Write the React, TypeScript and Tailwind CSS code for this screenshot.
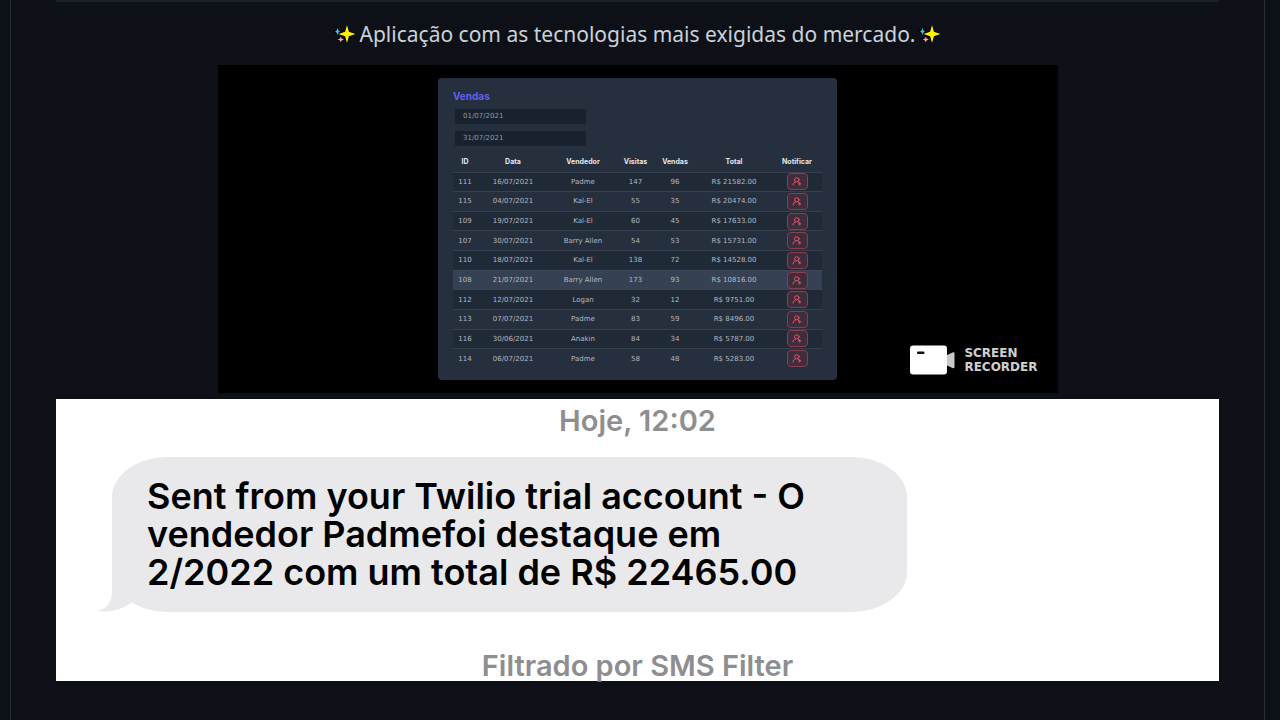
import React from "react";

type Sale = {
  id: number;
  date: string;
  seller: string;
  visits: number;
  deals: number;
  total: string;
};

const sales: Sale[] = [
  { id: 111, date: "16/07/2021", seller: "Padme", visits: 147, deals: 96, total: "21582.00" },
  { id: 115, date: "04/07/2021", seller: "Kal-El", visits: 55, deals: 35, total: "20474.00" },
  { id: 109, date: "19/07/2021", seller: "Kal-El", visits: 60, deals: 45, total: "17633.00" },
  { id: 107, date: "30/07/2021", seller: "Barry Allen", visits: 54, deals: 53, total: "15731.00" },
  { id: 110, date: "18/07/2021", seller: "Kal-El", visits: 138, deals: 72, total: "14528.00" },
  { id: 108, date: "21/07/2021", seller: "Barry Allen", visits: 173, deals: 93, total: "10816.00" },
  { id: 112, date: "12/07/2021", seller: "Logan", visits: 32, deals: 12, total: "9751.00" },
  { id: 113, date: "07/07/2021", seller: "Padme", visits: 83, deals: 59, total: "8496.00" },
  { id: 116, date: "30/06/2021", seller: "Anakin", visits: 84, deals: 34, total: "5787.00" },
  { id: 114, date: "06/07/2021", seller: "Padme", visits: 58, deals: 48, total: "5283.00" },
];

const highlightedId = 108;

function Sparkles() {
  return (
    <svg viewBox="0 0 22 20" className="h-5 w-[22px] shrink-0" aria-hidden="true">
      <g stroke="#000" strokeWidth="1.6" strokeLinejoin="round">
        <path d="M13 1.500 14.600 8 21 10l-6.400 2-1.600 6.500-1.600-6.500L5 10l6.400-2z" />
        <path d="M3.500 4l1 2.500L7 7.500l-2.500 1-1 2.500-1-2.500L0 7.500l2.500-1z" />
        <path d="M6.800 12.500l.9 2.100 2.300.9-2.300.9-.9 2.100-.9-2.100-2.300-.9 2.300-.9z" />
      </g>
      <path fill="#fff100" d="M13 1 14.900 7.800 21.500 10l-6.600 2.200-1.900 6.800-1.900-6.800L4.500 10l6.600-2.200z" />
      <path fill="#29c5f6" d="M3.500 4l1 2.500L6 7.500l-1.500 1-1 2.500-1-2.500L1 7.500l1.500-1z" />
      <path fill="#f59ac0" d="M6.800 12.500l.9 2.100 2.300.9-2.300.9-.9 2.100-.9-2.100-2.300-.9 2.300-.9z" />
    </svg>
  );
}

function NotifyIcon() {
  return (
    <svg viewBox="0 0 10 9" className="h-[9px] w-2.5" fill="none" stroke="currentColor" strokeLinecap="round" aria-hidden="true">
      <ellipse cx="4.800" cy="2.800" rx="2.300" ry="2" strokeWidth="1" />
      <path d="M1 8c.2-1.700 1.200-2.700 2.600-3.100M6 5l1.200 1" strokeWidth="1" />
      <path d="M7.700 5.800v2.200M6.600 6.900h2.200" strokeWidth="1" />
    </svg>
  );
}

function CameraIcon() {
  return (
    <svg viewBox="0 0 46 30" className="h-[30px] w-[46px] shrink-0" aria-hidden="true">
      <path d="M35 11l7.500-3.600q2-.8 2 1v13.400q0 2-2 1.200L35 19.500z" fill="#c9c9c9" />
      <rect x="0" y="0.500" width="37" height="29" rx="3" fill="#fff" />
      <rect x="7" y="6.500" width="7.500" height="2.400" rx="1" fill="#111" />
    </svg>
  );
}

function DateField({ id, label, value }: { id: string; label: string; value: string }) {
  return (
    <input
      id={id}
      type="text"
      aria-label={label}
      defaultValue={value}
      className="block h-[15px] w-[131px] rounded-[1px] bg-[#18222e] px-2 text-[7px] leading-[15px] text-[#9299a3] outline-none"
    />
  );
}

function SalesCard() {
  return (
    <section className="rounded-[4px] bg-[#252f3e] px-[15px] pt-3 pb-3 font-['DejaVu_Sans',sans-serif]">
      <h2 className="font-[Inter,sans-serif] text-[10px] leading-3 font-bold text-[#6261ea]">Vendas</h2>
      <div className="mt-[7px] ml-0.5 flex flex-col gap-[7px]">
        <DateField id="start" label="Data inicial" value="01/07/2021" />
        <DateField id="end" label="Data final" value="31/07/2021" />
      </div>
      <table className="mt-1.5 h-[216px] w-full table-fixed border-collapse text-center text-[7px] leading-[10px] text-[#b4b9c1]">
        <colgroup>
          <col className="w-6" />
          <col className="w-[72px]" />
          <col className="w-[68px]" />
          <col className="w-[37px]" />
          <col className="w-[42px]" />
          <col className="w-[76px]" />
          <col />
        </colgroup>
        <thead>
          <tr className="h-5 font-[Inter,sans-serif] text-[#e6e8eb]">
            <th>ID</th>
            <th>Data</th>
            <th>Vendedor</th>
            <th>Visitas</th>
            <th>Vendas</th>
            <th>Total</th>
            <th>Notificar</th>
          </tr>
        </thead>
        <tbody>
          {sales.map((s) => (
            <tr
              key={s.id}
              className={
                s.id === highlightedId
                  ? "border-t border-[#3b475a] bg-[#364154]"
                  : "border-t border-[#364150] odd:bg-[#202a37] even:bg-[#252f3e]"
              }
            >
              <td>{s.id}</td>
              <td>{s.date}</td>
              <td>{s.seller}</td>
              <td>{s.visits}</td>
              <td>{s.deals}</td>
              <td>R$ {s.total}</td>
              <td>
                <button
                  type="button"
                  aria-label={`Notificar ${s.seller}`}
                  className="mx-auto flex h-[17px] w-[21px] items-center justify-center rounded-[4px] border border-[#8a3f50] bg-[#402c3b] text-[#d85a6c]"
                >
                  <NotifyIcon />
                </button>
              </td>
            </tr>
          ))}
        </tbody>
      </table>
    </section>
  );
}

function Recording() {
  return (
    <div className="mx-auto grid w-full max-w-[840px] grid-cols-[1fr_399px_1fr] bg-black py-[13px]">
      <div className="col-start-2">
        <SalesCard />
      </div>
      <div className="flex items-center gap-2 self-end justify-self-end pr-5 pb-[5px]">
        <CameraIcon />
        <p className="font-['DejaVu_Sans',sans-serif] text-[12px] leading-[14px] font-bold text-[#cfcfcf]">
          SCREEN
          <br />
          RECORDER
        </p>
      </div>
    </div>
  );
}

function SmsMessage() {
  return (
    <div className="mt-1.5 flex flex-col bg-white font-[Inter,sans-serif]">
      <p className="pt-1.5 text-center text-[29px] leading-8 font-semibold text-[#8e8e91]">Hoje, 12:02</p>
      <div className="relative mt-5 ml-14 w-[795px] max-w-full rounded-[56px/40px] bg-[#e9e9eb] px-[35px] pt-5 pb-[21px]">
        <p className="text-[36px] leading-[38px] font-semibold whitespace-nowrap text-black">
          Sent from your Twilio trial account - O
          <br />
          vendedor Padmefoi destaque em
          <br />
          2/2022 com um total de R$ 22465.00
        </p>
        <svg viewBox="0 0 36 40" className="absolute bottom-0 -left-4 h-10 w-9" fill="#e9e9eb" aria-hidden="true">
          <path d="M16 0v20c0 10-5 17-15 19 14 2 26-2 34-8V0z" />
        </svg>
      </div>
      <p className="mt-[38px] text-center text-[29px] leading-[31px] font-semibold text-[#8e8e91]">
        Filtrado por SMS Filter
      </p>
    </div>
  );
}

export default function App() {
  return (
    <div className="min-h-screen bg-[#0d1117] pr-[15px] pl-2.5">
      <main className="min-h-screen border-x border-[#2b3038] px-[45px]">
        <hr className="mb-[18px] border-t-2 border-[#1c2129]" />
        <h1 className="mb-[17px] flex items-center justify-center gap-1 font-['Noto_Sans',sans-serif] text-[21px] leading-7 font-normal text-[#c9d1d9]">
          <Sparkles />
          Aplicação com as tecnologias mais exigidas do mercado.
          <Sparkles />
        </h1>
        <Recording />
        <SmsMessage />
      </main>
    </div>
  );
}
